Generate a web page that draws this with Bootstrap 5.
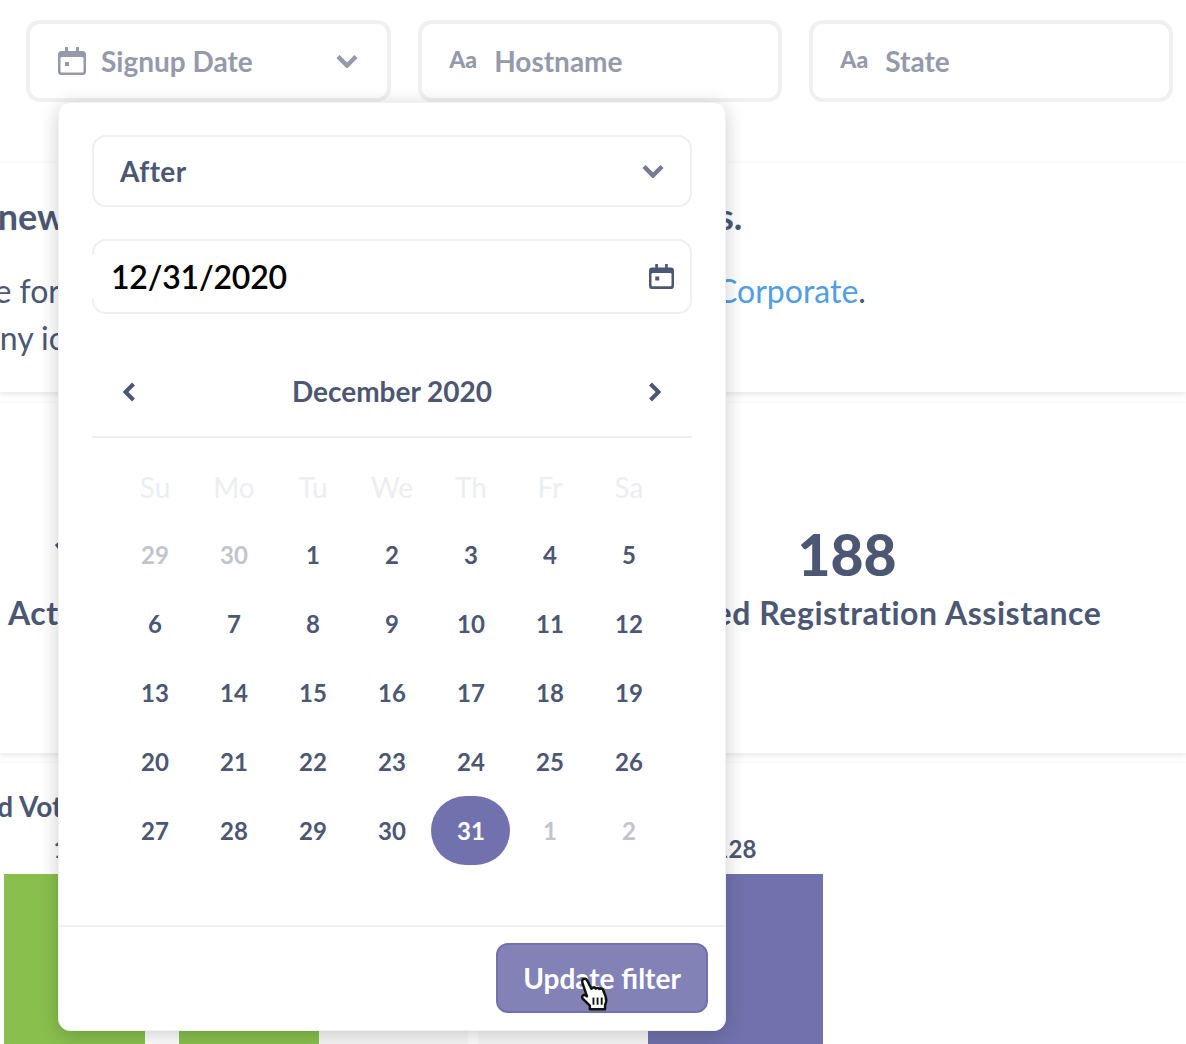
<!DOCTYPE html>
<html lang="en">
<head>
<meta charset="utf-8">
<title>Signup Date filter</title>
<link href="https://cdn.jsdelivr.net/npm/bootstrap@5.3.0/dist/css/bootstrap.min.css" rel="stylesheet">
<style>
html,body{height:1044px;overflow:hidden;background:#fff}
body{font-family:Lato,"Liberation Sans",sans-serif;color:#4c5773;position:relative;-webkit-font-smoothing:antialiased;font-variant-ligatures:none}
.fbar{padding:20px 13px 0 26px;gap:27.5px;height:102px}
.fwidget{flex:1 1 0;height:82px;border:4px solid #f0f0f0;border-radius:14px;color:#949aab;font-size:28px;font-weight:700;padding:0 29px 0 28px;gap:15px}
.fwidget.txt{padding-left:27px;gap:17px}
.aa{font-size:23px;font-weight:900;line-height:1;position:relative;top:-2px;width:28px}
.sect{box-shadow:0 2px 6px rgba(0,0,0,.1);background:#fff}
.s1{margin-top:61px;height:229px;padding-top:31px}
.s2{margin-top:11px;height:350px}
.s3{margin-top:10px;height:300px;position:relative}
.lcell{width:66px;flex:none;justify-content:flex-end;white-space:nowrap;display:flex}
.lcell.w60{width:60px}
.lcell.w64{width:64px}
.lcell.w98{width:100px}
.hline{font-size:36px;font-weight:700;line-height:44px}
.gap1{width:652px;flex:none}
.gap2{width:656px;flex:none}
.pline{font-size:32px;line-height:47px}
.pline.first{margin-top:29px}
.lnk{color:#509ee3;text-decoration:none}
.stats{padding-top:120px}
.stat{text-align:center;flex:none;white-space:nowrap}
.stat.left{width:186px;margin-left:8px}
.stat.right{width:504px;margin-left:401px}
.num{font-size:57px;font-weight:900;line-height:62px}
.lab{font-size:32px;font-weight:700;line-height:40px;margin-top:8px;letter-spacing:.55px}
.stat.left .lab{display:flex;justify-content:flex-start}
.ctitle{font-size:28px;font-weight:700;line-height:30px;padding-top:28px}
.barrow{position:absolute;left:4px;top:69px;display:flex;align-items:stretch;height:231px}
.barcol{display:flex;flex-direction:column;align-items:center;font-size:24px;font-weight:700;flex:none}
.barcol span{display:block;height:42px;line-height:34px}
.barfill{flex:1 1 auto;width:100%}
.gr{background:#88bf4d}
.pu{background:#7172ad}
.ne{background:#f8f8f8}
.b1{width:141px;margin-right:34px}
.b2{width:140px}
.b3{width:149px;margin-right:10px}
.b4{width:170px}
.b5{width:175px}
.pop{position:absolute;left:58px;top:102px;width:668px;height:929px;background:#fff;border:1px solid #f0f2f4;border-radius:12px;box-shadow:0 4px 20px rgba(0,0,0,.2);z-index:5;padding:32px 33px 0;display:flex;flex-direction:column}
.psel{height:72px;border:2px solid #f0f0f0;border-radius:14px;padding:0 26px;font-size:28px;font-weight:700;flex:none}
.psel span{letter-spacing:.4px}
.pdate{height:75px;margin-top:32px;border:2px solid #f0f0f0;border-radius:14px;padding-right:16px;flex:none;overflow:visible}
.dval{align-self:stretch;margin:14px 0;margin-left:-2px;padding-left:19px;background:#fff;color:#000;font-size:32px;font-weight:600;line-height:43px;letter-spacing:-.2px}
.phead{height:92px;margin-top:32px;flex:none;padding:0 30px;border-bottom:2px solid #f0f0f0;font-size:28px;font-weight:700}
.phead svg{position:relative;top:1px}
.calg{display:grid;grid-template-columns:repeat(7,79px);grid-template-rows:67px repeat(5,69px);width:553px;margin:15px 0 0 23px;text-align:center;font-size:24px;font-weight:700;align-items:center;justify-items:center}
.wd{font-size:28px;font-weight:400;color:#eceef2;height:67px;line-height:69px;width:79px;padding-left:1px}
.cday{width:79px;height:69px;line-height:69px;padding-left:1px}
.cday.off{color:#c1c4ce}
.cday.sel{background:#7172ad;color:#fff;border-radius:36px}
.pfoot{position:absolute;left:0;right:0;top:822px;height:105px;border-top:2px solid #f0f0f0;padding:16px 17px 0 0;display:flex;justify-content:flex-end;align-items:flex-start}
.upbtn{width:212px;height:70px;background:#8282b6;border:2px solid #7172ad;border-radius:12px;color:#fff;font-size:28px;font-weight:700;padding:0;line-height:1;font-variant-ligatures:common-ligatures}
.upbtn:hover{background:#8282b6;color:#fff;border-color:#7172ad}
.hand{position:absolute;left:578px;top:977px;z-index:6;pointer-events:none}
</style>
</head>
<body>
<div class="d-flex fbar">
  <div class="fwidget d-flex align-items-center">
    <svg width="28" height="28" viewBox="0 0 28 28" fill="none" class="flex-none"><path d="M7 0h3v4H18V0h3v4h3.5A3.5 3.5 0 0 1 28 7.5v17a3.5 3.5 0 0 1-3.5 3.5h-21A3.5 3.5 0 0 1 0 24.500v-17A3.500 3.500 0 0 1 3.500 4H7z" fill="#949aab"/><rect x="2.500" y="10" width="23" height="15.500" rx="1.500" fill="#fff"/><rect x="7" y="15" width="4" height="4" fill="#949aab"/></svg>
    <span class="flex-grow-1">Signup Date</span>
    <svg width="22" height="14" viewBox="0 0 22 14" fill="none"><path d="M2 2.500l9 9 9-9" stroke="#949aab" stroke-width="4.500"/></svg>
  </div>
  <div class="fwidget txt d-flex align-items-center"><span class="aa">Aa</span><span>Hostname</span></div>
  <div class="fwidget txt d-flex align-items-center"><span class="aa">Aa</span><span>State</span></div>
</div>

<section class="sect s1">
  <div class="d-flex hline"><div class="lcell">See the new</div><div class="gap1"></div><div>s.</div></div>
  <div class="d-flex pline first"><div class="lcell w60">More for</div><div class="gap2"></div><div><a class="lnk" href="#">Corporate</a>.</div></div>
  <div class="d-flex pline"><div class="lcell w64">any ic</div></div>
</section>

<section class="sect s2">
  <div class="d-flex stats">
    <div class="stat left"><div class="num">188</div><div class="lab">Active Voters</div></div>
    <div class="stat right"><div class="num">188</div><div class="lab">Requested Registration Assistance</div></div>
  </div>
</section>

<section class="sect s3">
  <div class="ctitle d-flex"><div class="lcell w98">Registered Voters</div></div>
  <div class="barrow">
    <div class="barcol b1"><span>128</span><div class="barfill gr"></div></div>
    <div class="barcol b2"><span>128</span><div class="barfill gr"></div></div>
    <div class="barcol b3"><span>&nbsp;</span><div class="barfill ne"></div></div>
    <div class="barcol b4"><span>&nbsp;</span><div class="barfill ne"></div></div>
    <div class="barcol b5"><span>128</span><div class="barfill pu"></div></div>
  </div>
</section>

<div class="pop">
  <div class="psel d-flex align-items-center justify-content-between"><span>After</span>
    <svg width="22" height="14" viewBox="0 0 22 14" fill="none"><path d="M2 2.500l9 9 9-9" stroke="#767c90" stroke-width="4.500"/></svg>
  </div>
  <div class="pdate d-flex align-items-center justify-content-between">
    <div class="dval">12/31/2020</div>
    <svg width="25" height="25" viewBox="0 0 28 28" fill="none"><path d="M7 0h3v4H18V0h3v4h3.500A3.500 3.500 0 0 1 28 7.500v17a3.500 3.500 0 0 1-3.500 3.500h-21A3.500 3.500 0 0 1 0 24.500v-17A3.500 3.500 0 0 1 3.500 4H7z" fill="#4c5773"/><rect x="2.800" y="10" width="22.400" height="15" rx="1.500" fill="#fff"/><rect x="7" y="14" width="4.500" height="4.500" fill="#4c5773"/></svg>
  </div>
  <div class="phead d-flex align-items-center justify-content-between">
    <svg width="14" height="20" viewBox="0 0 14 20" fill="none"><path d="M11.500 2L3.500 10l8 8" stroke="#4c5773" stroke-width="4"/></svg>
    <span>December 2020</span>
    <svg width="14" height="20" viewBox="0 0 14 20" fill="none"><path d="M2.500 2l8 8-8 8" stroke="#4c5773" stroke-width="4"/></svg>
  </div>
  <div class="calg">
    <div class="wd">Su</div><div class="wd">Mo</div><div class="wd">Tu</div><div class="wd">We</div><div class="wd">Th</div><div class="wd">Fr</div><div class="wd">Sa</div>
    <div class="cday off">29</div><div class="cday off">30</div><div class="cday">1</div><div class="cday">2</div><div class="cday">3</div><div class="cday">4</div><div class="cday">5</div>
    <div class="cday">6</div><div class="cday">7</div><div class="cday">8</div><div class="cday">9</div><div class="cday">10</div><div class="cday">11</div><div class="cday">12</div>
    <div class="cday">13</div><div class="cday">14</div><div class="cday">15</div><div class="cday">16</div><div class="cday">17</div><div class="cday">18</div><div class="cday">19</div>
    <div class="cday">20</div><div class="cday">21</div><div class="cday">22</div><div class="cday">23</div><div class="cday">24</div><div class="cday">25</div><div class="cday">26</div>
    <div class="cday">27</div><div class="cday">28</div><div class="cday">29</div><div class="cday">30</div><div class="cday sel">31</div><div class="cday off">1</div><div class="cday off">2</div>
  </div>
  <div class="pfoot"><button type="button" class="btn upbtn">Update filter</button></div>
</div>

<svg class="hand" width="34" height="37" viewBox="0 0 32 36"><path d="M4 2.500c1.500-1.500 3.500-.8 4.500 1l4 8 1-1c1.500-.8 2.700-.2 3.300.8 1-1 2.800-.8 3.500.4 1.200-.8 2.800-.5 3.500.7l2.500 6.500c1 3 .8 6-.5 8.500v4H11v-3.500L4 21c-1-1.300-.5-3 1-3.500 1.200-.3 2.300.3 3.200 1.300L4 6.500c-.6-1.500-.7-3 0-4z" fill="#fff" stroke="#111" stroke-width="2.400" stroke-linejoin="round"/><path d="M14.500 20v7M18.500 20v7M22.500 20v7" stroke="#111" stroke-width="1.800"/></svg>
<script src="https://cdn.jsdelivr.net/npm/bootstrap@5.3.0/dist/js/bootstrap.bundle.min.js"></script>
</body>
</html>
